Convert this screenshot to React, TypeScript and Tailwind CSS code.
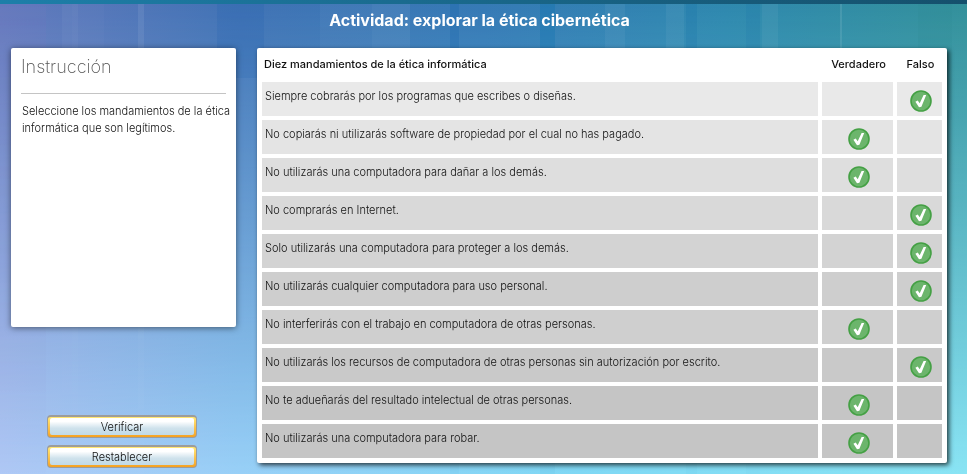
import { useState } from "react";

type Answer = "verdadero" | "falso";

const rows: { text: string; answer: Answer; shade: string }[] = [
  { text: "Siempre cobrarás por los programas que escribes o diseñas.", answer: "falso", shade: "bg-[#e9e9e9]" },
  { text: "No copiarás ni utilizarás software de propiedad por el cual no has pagado.", answer: "verdadero", shade: "bg-[#e4e4e4]" },
  { text: "No utilizarás una computadora para dañar a los demás.", answer: "verdadero", shade: "bg-[#dedede]" },
  { text: "No comprarás en Internet.", answer: "falso", shade: "bg-[#d9d9d9]" },
  { text: "Solo utilizarás una computadora para proteger a los demás.", answer: "falso", shade: "bg-[#d3d3d3]" },
  { text: "No utilizarás cualquier computadora para uso personal.", answer: "falso", shade: "bg-[#cecece]" },
  { text: "No interferirás con el trabajo en computadora de otras personas.", answer: "verdadero", shade: "bg-[#cfcfcf]" },
  { text: "No utilizarás los recursos de computadora de otras personas sin autorización por escrito.", answer: "falso", shade: "bg-[#c9c9c9]" },
  { text: "No te adueñarás del resultado intelectual de otras personas.", answer: "verdadero", shade: "bg-[#c5c5c5]" },
  { text: "No utilizarás una computadora para robar.", answer: "verdadero", shade: "bg-[#c5c5c5]" },
];

// Vertical light and dark bands: x, width, height, colour, opacity
const bands: [number, number, number, string, number][] = [
  [0, 46, 474, "#8a78c8", 0.1],
  [62, 16, 474, "#ffffff", 0.04],
  [72, 32, 474, "#ffffff", 0.02],
  [138, 6, 474, "#ffffff", 0.08],
  [217, 47, 78, "#2060b0", 0.2],
  [320, 90, 474, "#ffffff", 0.03],
  [372, 38, 474, "#ffffff", 0.03],
  [450, 9, 474, "#0b5aa8", 0.22],
  [540, 15, 474, "#0870b0", 0.3],
  [605, 20, 474, "#ffffff", 0.05],
  [666, 18, 474, "#ffffff", 0.05],
  [686, 11, 474, "#0b6aa8", 0.18],
  [746, 14, 474, "#0b6aa8", 0.14],
  [762, 16, 474, "#ffffff", 0.05],
  [840, 2, 474, "#ffffff", 0.1],
  [918, 34, 120, "#2a8a90", 0.14],
];

function Backdrop() {
  return (
    <svg className="absolute inset-0 -z-10 h-full w-full" viewBox="0 0 967 474" preserveAspectRatio="none" aria-hidden="true">
      <defs>
        <linearGradient id="top">
          <stop offset="0" stopColor="#6279bc" />
          <stop offset="0.25" stopColor="#4072b4" />
          <stop offset="0.5" stopColor="#3579b5" />
          <stop offset="0.75" stopColor="#2e88ae" />
          <stop offset="1" stopColor="#33909a" />
        </linearGradient>
        <linearGradient id="bottom">
          <stop offset="0" stopColor="#b0caf6" />
          <stop offset="0.25" stopColor="#98d0f7" />
          <stop offset="0.6" stopColor="#7fd8f4" />
          <stop offset="1" stopColor="#8ae4f4" />
        </linearGradient>
        <linearGradient id="fade" x2="0" y2="1">
          <stop offset="0" stopColor="#000" />
          <stop offset="1" stopColor="#fff" />
        </linearGradient>
        <linearGradient id="bandFade" x2="0" y2="1">
          <stop offset="0" stopColor="#fff" />
          <stop offset="0.5" stopColor="#777" />
          <stop offset="1" stopColor="#222" />
        </linearGradient>
        <mask id="down" style={{ maskType: "luminance" }}>
          <rect width="967" height="474" fill="url(#fade)" />
        </mask>
        <mask id="bandMask" style={{ maskType: "luminance" }}>
          <rect width="967" height="474" fill="url(#bandFade)" />
        </mask>
      </defs>
      <rect width="967" height="474" fill="url(#top)" />
      <rect width="967" height="474" fill="url(#bottom)" mask="url(#down)" />
      <g mask="url(#bandMask)">
        {bands.map(([x, width, height, fill, opacity]) => (
          <rect key={x} x={x} width={width} height={height} fill={fill} opacity={opacity} />
        ))}
      </g>
    </svg>
  );
}

function CheckMark() {
  return (
    <svg viewBox="0 0 22 22" className="pointer-events-none col-start-1 row-start-1 size-[22px]" aria-hidden="true">
      <circle cx="11" cy="11" r="10" fill="#6cb56c" stroke="#44a044" strokeWidth="1.6" />
      <path d="M5.4 11.8 L7.7 10.6 L9.7 13.3 L13.6 4.9 L16.2 4.9 L11.4 16.7 L9 17.3 Z" fill="#fff" />
    </svg>
  );
}

function Choice({ row, label, checked, onPick }: { row: number; label: string; checked: boolean; onPick: () => void }) {
  return (
    <label className="grid justify-center pt-2 pl-[3px]">
      <input
        type="radio"
        name={`mandamiento-${row}`}
        aria-label={label}
        checked={checked}
        onChange={onPick}
        className="col-start-1 row-start-1 size-[22px] cursor-pointer appearance-none rounded-full"
      />
      {checked && <CheckMark />}
    </label>
  );
}

function ActionButton({ children, onClick }: { children: string; onClick: () => void }) {
  return (
    <button
      type="button"
      onClick={onClick}
      className="h-[23px] w-[150px] rounded-[4px] border border-t-2 border-[#9c9c9c] bg-linear-to-b from-[#ffe873] to-[#f5a21f] px-[2px] pt-px pb-[2px] text-[11px] leading-4 font-light text-[#111]"
    >
      <span className="flex h-full items-center justify-center rounded-[2px] bg-linear-to-b from-white from-20% via-[#cfe2ec] via-60% to-[#c0dae7]">
        {children}
      </span>
    </button>
  );
}

export default function App() {
  const [answers, setAnswers] = useState<(Answer | null)[]>(rows.map((r) => r.answer));
  const pick = (i: number, a: Answer) => setAnswers((old) => old.map((v, j) => (j === i ? a : v)));

  return (
    <div className="relative isolate min-h-screen font-['Inter','Liberation_Sans',sans-serif]">
      <Backdrop />
      <div className="h-1 bg-linear-to-r from-[#1d7fa9] to-[#15506c]" />
      <h1 className="pt-1 pr-2 pb-4 text-center text-[16px] leading-6 font-bold text-white">
        Actividad: explorar la ética cibernética
      </h1>
      <main className="flex gap-[21px] pr-5 pl-[11px]">
        <div className="flex w-[225px] shrink-0 flex-col">
          <section className="h-[279px] rounded-[2px] bg-white px-[10px] shadow-[0_1px_6px_rgba(0,0,0,0.5)]">
            <h2 className="border-b border-[#c4c4c4] pt-[7px] pb-[14px] text-[18px] leading-6 font-extralight text-[#555]">Instrucción</h2>
            <p className="-mr-2 pt-[9px] pl-px text-[11px] leading-[17px] font-light text-[#111]">
              Seleccione los mandamientos de la ética informática que son legítimos.
            </p>
          </section>
          <div className="flex flex-col gap-[7px] pt-[88px] pl-9">
            <ActionButton onClick={() => undefined}>Verificar</ActionButton>
            <ActionButton onClick={() => setAnswers(rows.map(() => null))}>Restablecer</ActionButton>
          </div>
        </div>
        <section className="flex-1 self-start rounded-[2px] bg-white p-px shadow-[2px_2px_5px_rgba(0,0,0,0.75)]">
          <table className="w-full table-fixed border-separate border-spacing-1 text-[11px] leading-4">
            <colgroup>
              <col />
              <col className="w-[71px]" />
              <col className="w-[45px]" />
            </colgroup>
            <thead>
              <tr className="h-[25px] text-[#111]">
                <th className="px-[2px] pt-[3px] text-left align-top font-medium">Diez mandamientos de la ética informática</th>
                <th className="pt-[3px] pl-[2px] align-top font-medium">Verdadero</th>
                <th className="pt-[3px] pl-[2px] align-top font-medium">Falso</th>
              </tr>
            </thead>
            <tbody>
              {rows.map((row, i) => (
                <tr key={row.text} className="h-[34px]">
                  <td className={`${row.shade} px-[3px] pt-[6px] align-top font-light text-[#111]`}>{row.text}</td>
                  <td className={`${row.shade} align-top`}>
                    <Choice row={i} label={`Verdadero: ${row.text}`} checked={answers[i] === "verdadero"} onPick={() => pick(i, "verdadero")} />
                  </td>
                  <td className={`${row.shade} align-top`}>
                    <Choice row={i} label={`Falso: ${row.text}`} checked={answers[i] === "falso"} onPick={() => pick(i, "falso")} />
                  </td>
                </tr>
              ))}
            </tbody>
          </table>
        </section>
      </main>
    </div>
  );
}
